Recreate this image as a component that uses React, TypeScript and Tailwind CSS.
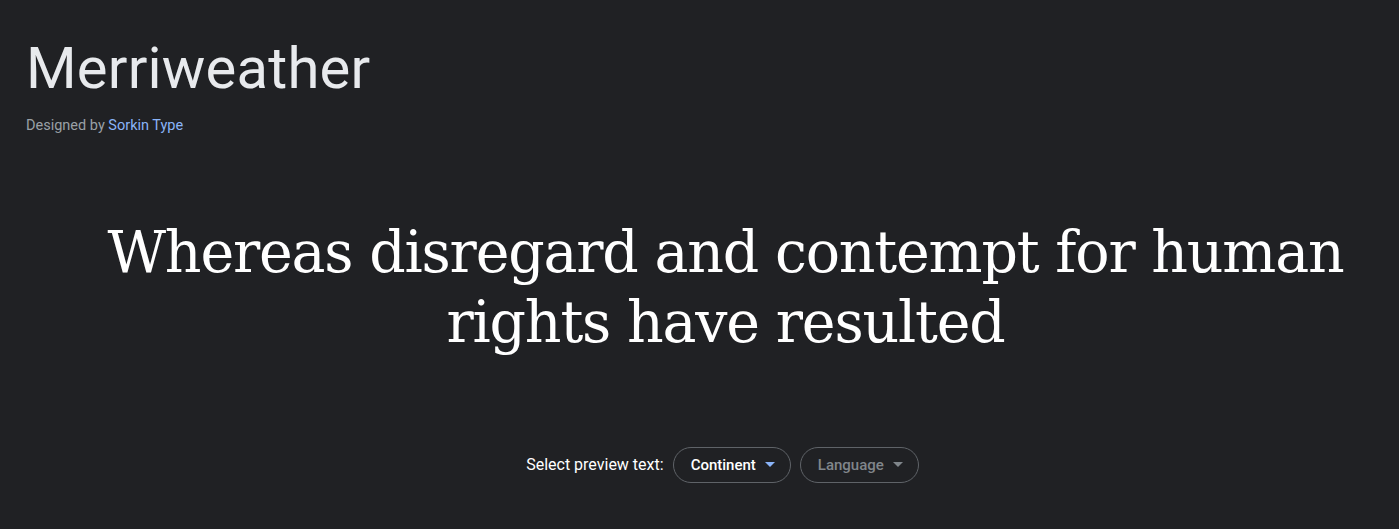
import React from "react";

const Caret = ({ color }: { color: string }) => (
  <svg width="10" height="5" viewBox="0 0 10 5" className="ml-[9px]">
    <path d="M0 0 L10 0 L5 5 Z" fill={color} />
  </svg>
);

export default function App() {
  return (
    <div className="min-h-[529px] bg-[#202124] font-['Roboto','Open_Sans',sans-serif] text-[#e8eaed]">
      <header className="px-[26px] pt-[36px]">
        <h1 className="text-[58px] leading-[64px] font-normal tracking-[0.2px] text-[#e8eaed]">Merriweather</h1>
        <p className="mt-[15px] text-[14.5px] text-[#9aa0a6]">
          Designed by <a className="text-[#8ab4f8]">Sorkin Type</a>
        </p>
      </header>

      <section className="pl-[78px] pr-[26px] pt-[80px] text-center">
        <p className="font-['DejaVu_Serif','Liberation_Serif',serif] text-[57px] leading-[70px] tracking-[-1.2px] text-white">
          Whereas disregard and contempt for human
          <br />
          rights have resulted
        </p>
      </section>

      <div className="mt-[90px] flex items-center justify-center gap-[9px] pl-[46px]">
        <span className="text-[16px] text-white">Select preview text:</span>
        <button className="flex h-[36px] items-center rounded-full border border-[#5f6368] pl-[17px] pr-[15px] text-[15px] font-medium text-white">
          Continent
          <Caret color="#8ab4f8" />
        </button>
        <button className="flex h-[36px] items-center rounded-full border border-[#5f6368] pl-[17px] pr-[15px] text-[15px] font-medium text-[#80868b]">
          Language
          <Caret color="#80868b" />
        </button>
      </div>
    </div>
  );
}
